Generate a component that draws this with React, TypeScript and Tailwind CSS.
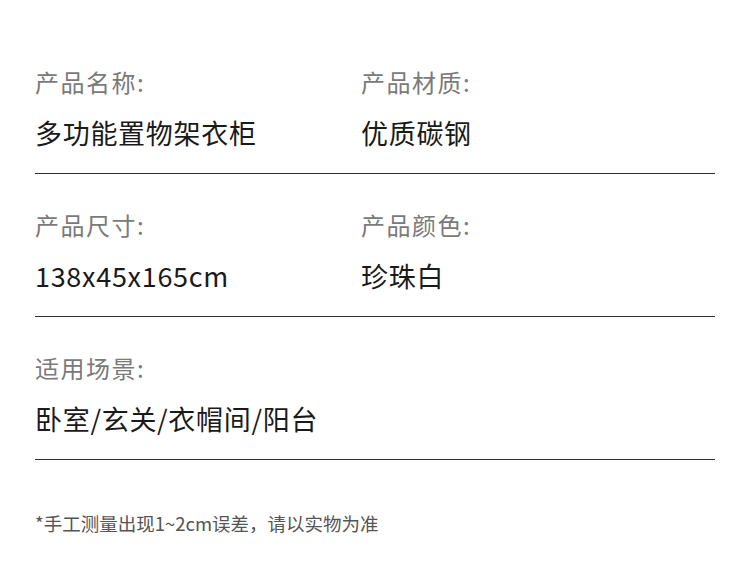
const rows: { label: string; value: string }[][] = [
  [
    { label: '产品名称:', value: '多功能置物架衣柜' },
    { label: '产品材质:', value: '优质碳钢' },
  ],
  [
    { label: '产品尺寸:', value: '138x45x165cm' },
    { label: '产品颜色:', value: '珍珠白' },
  ],
  [{ label: '适用场景:', value: '卧室/玄关/衣帽间/阳台' }],
]

const font = { fontFamily: '"Noto Sans CJK SC", "Noto Sans", sans-serif' }

export default function App() {
  return (
    <div className="w-[750px] h-[575px] bg-white pt-[31px] px-[35px]" style={font}>
      {rows.map((row, i) => (
        <div
          key={i}
          className="grid grid-cols-[326px_1fr] pt-[36px] pb-[22px] border-b border-[#2e2e2e]"
        >
          {row.map((item) => (
            <div key={item.label} className="flex flex-col gap-[18px]">
              <div className="h-[30px] leading-[30px] text-[24px] tracking-[1.5px] text-[#7a7a7a]">
                {item.label}
              </div>
              <div className="h-[36px] leading-[36px] text-[27px] tracking-[0.7px] text-[#1a1a1a]">
                {item.value}
              </div>
            </div>
          ))}
        </div>
      ))}
      <p className="mt-[49px] h-[28px] leading-[28px] text-[18.5px] text-[#555]">
        *手工测量出现1~2cm误差，请以实物为准
      </p>
    </div>
  )
}
